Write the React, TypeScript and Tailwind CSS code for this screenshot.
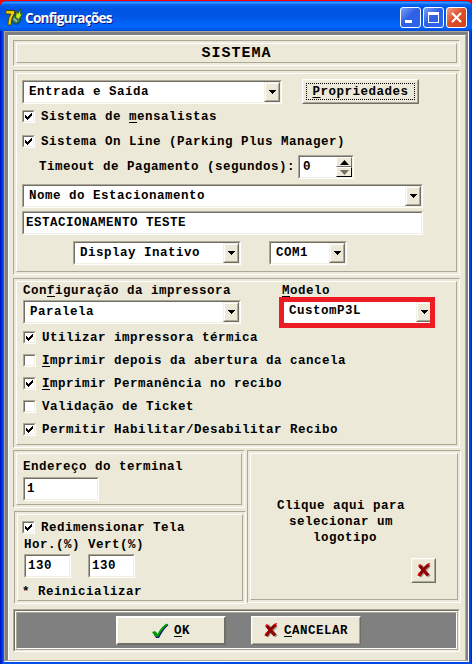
import React from "react";

const mono = "font-['Liberation_Mono','Courier_New',monospace] font-bold text-[12.5px] tracking-[0.5px] leading-4 text-black whitespace-pre";

function Panel({ className = "", inner = "", children }: { className?: string; inner?: string; children?: React.ReactNode }) {
  return (
    <div className={`shrink-0 border border-t-[#aca899] border-l-[#aca899] border-r-white border-b-white p-[2px] ${className}`}>
      <div className={`h-full border border-t-white border-l-white border-r-[#aca899] border-b-[#aca899] ${inner}`}>{children}</div>
    </div>
  );
}

function Sunken({ className = "", children }: { className?: string; children?: React.ReactNode }) {
  return (
    <div className={`shrink-0 border border-t-[#aca899] border-l-[#aca899] border-r-white border-b-white ${className}`}>
      <div className="flex h-full w-full items-center border border-t-[#716f64] border-l-[#716f64] border-r-[#f1efe2] border-b-[#f1efe2] bg-white">
        {children}
      </div>
    </div>
  );
}

function ArrowButton() {
  return (
    <div className="flex h-full w-4 shrink-0 items-center justify-center border border-t-[#f1efe2] border-l-[#f1efe2] border-r-[#716f64] border-b-[#716f64] bg-[#ece9d8]">
      <div className="flex h-full w-full items-center justify-center border border-t-white border-l-white border-r-[#aca899] border-b-[#aca899]">
        <svg width="7" height="4" className="shrink-0" shapeRendering="crispEdges">
          <path d="M0 0h7v1h-1v1h-1v1h-1v1h-1v-1h-1v-1h-1v-1h-1z" />
        </svg>
      </div>
    </div>
  );
}

function Combo({ className = "", text }: { className?: string; text: string }) {
  return (
    <Sunken className={`h-6 ${className}`}>
      <span className="flex-1 pl-[5px]">{text}</span>
      <ArrowButton />
    </Sunken>
  );
}

function Check({ className = "", checked = true, children }: { className?: string; checked?: boolean; children: React.ReactNode }) {
  return (
    <div className={`flex h-[13px] items-center gap-[6px] ${className}`}>
      <Sunken className="h-[13px] w-[13px]">
        {checked && (
          <svg width="7" height="7" className="ml-px shrink-0" shapeRendering="crispEdges">
            <path d="M0 2h1v1h1v1h1v-1h1v-1h1v-1h1v-1h1v3h-1v1h-1v1h-1v1h-1v1h-1v-1h-1v-1h-1z" />
          </svg>
        )}
      </Sunken>
      <span>{children}</span>
    </div>
  );
}

function U({ children }: { children: React.ReactNode }) {
  return <span className="underline decoration-1 underline-offset-2">{children}</span>;
}

function RedX() {
  return (
    <svg width="14" height="15" viewBox="0 0 14 15" className="shrink-0">
      <path d="M3 2l8.5 11M11.5 2L2 13" stroke="#a09c90" strokeWidth="3" transform="translate(1 .5)" fill="none" />
      <path d="M2.500 2.500L11 12.500M12 1.500Q7 5 2 13" stroke="#900000" strokeWidth="3.2" fill="none" />
      <path d="M1.500 2.500l2-1M10 2l3-1.500M1 12.500l1.500-3" stroke="#f00000" strokeWidth="1.2" fill="none" />
    </svg>
  );
}

const raised = "border border-t-white border-l-white border-r-[#716f64] border-b-[#716f64] bg-[#ece9d8]";
const raisedInner = "flex h-full w-full items-center justify-center border border-t-[#f1efe2] border-l-[#f1efe2] border-r-[#aca899] border-b-[#aca899]";

function TitleBar() {
  const btn = "flex h-[21px] w-[21px] items-center justify-center rounded-[3px] border border-white";
  return (
    <div className="flex h-[30px] shrink-0 items-center rounded-t-[6px] bg-[linear-gradient(180deg,#0058ee_0%,#3593ff_5%,#0262ee_13%,#0054e3_25%,#0054e3_45%,#0064fa_78%,#0066ff_88%,#0048d8_100%)] pl-[5px] pr-[5px]">
      <svg width="18" height="18" viewBox="0 0 18 18" className="mt-1 shrink-0">
        <circle cx="11" cy="10.500" r="4.600" fill="#287860" stroke="#123c50" />
        <path d="M.8 1.500h8.700v3Q6 9 6.200 16H2.800Q2.800 9 5.800 5H.8z" fill="#e8d000" stroke="#40380a" strokeWidth=".9" />
        <path d="M10.500 8.500l1-6.500 1.500 2.500L15.500 0v5l2-.5-3.500 6z" fill="#c8e818" stroke="#285010" strokeWidth=".8" />
        <path d="M8.500 9.500l3.500 3" stroke="#a0b8a0" strokeWidth="1.800" />
      </svg>
      <span className="ml-[2px] mt-[3px] flex-1 whitespace-nowrap font-['Open_Sans','Noto_Sans',sans-serif] text-[13.5px] font-bold leading-5 tracking-[-0.7px] text-white [text-shadow:1px_1px_0_#0a1883]">
        Configurações
      </span>
      <div className="flex gap-[2px] pt-[3px]">
        <div className={`${btn} bg-[linear-gradient(135deg,#7ba4f8,#2f5fe4_45%,#2b66f0)]`}>
          <svg width="19" height="19" shapeRendering="crispEdges"><path d="M4 12h7v3H4z" fill="#fff" /></svg>
        </div>
        <div className={`${btn} bg-[linear-gradient(135deg,#7ba4f8,#2f5fe4_45%,#2b66f0)]`}>
          <svg width="19" height="19" shapeRendering="crispEdges"><path d="M4 4h11v11H4zM5 7v7h9V7z" fill="#fff" fillRule="evenodd" /></svg>
        </div>
        <div className={`${btn} bg-[linear-gradient(135deg,#f0a088,#e0502a_45%,#d04018)]`}>
          <svg width="19" height="19"><path d="M5 5l9 9M14 5l-9 9" stroke="#fff" strokeWidth="2.2" /></svg>
        </div>
      </div>
    </div>
  );
}

export default function App() {
  return (
    <div className="h-[664px] w-[472px] overflow-hidden bg-[#ff0000] pt-px">
      <div className={`flex h-[663px] flex-col rounded-t-[7px] bg-[linear-gradient(90deg,#0010c8_0,#0030e0_2px,#1668f0_4px,#0050e8_5px,#0048e8_468px,#0050f0_470px,#0020b8_472px)] ${mono}`}>
        <TitleBar />
        <div className="ml-1 h-[631px] w-[465px] border border-t-[#aca899] border-l-[#aca899] border-r-white border-b-white">
          <div className="h-full border-b border-l-[3px] border-r-2 border-t-[3px] border-b-[#aca899] border-l-[#808080] border-r-[#808080] border-t-[#808080]">
            <div className="flex h-full flex-col border-l border-r border-t border-l-white border-r-[#aca899] border-t-white bg-[#ece9d8] pl-1 pt-1">
              <Panel className="h-[26px] w-[447px]" inner="flex items-center justify-center text-[15px] tracking-[1px]">
                <span className="pt-px">SISTEMA</span>
              </Panel>

              <Panel className="mt-1 h-[205px] w-[447px]" inner="pl-[5px] pt-[5px]">
                <div className="flex items-start">
                  <Combo className="mt-px w-[260px]" text="Entrada e Saída" />
                  <div className={`ml-5 h-[25px] w-[117px] ${raised}`}>
                    <div className={raisedInner}>
                      <div className="flex h-[17px] w-[109px] items-center justify-center border border-dotted border-black">
                        <span><U>P</U>ropriedades</span>
                      </div>
                    </div>
                  </div>
                </div>
                <Check className="mt-[6px]">Sistema de <U>m</U>ensalistas</Check>
                <Check className="mt-3">Sistema On Line (Parking Plus Manager)</Check>
                <div className="mt-[7px] flex h-6 items-center pl-[17px]">
                  <span className="w-[259px]">Timeout de Pagamento (segundos):</span>
                  <Sunken className="h-6 w-14">
                    <span className="flex-1 pl-[3px]">0</span>
                    <div className="flex h-full w-4 flex-col">
                      <div className="flex h-[10px] items-center justify-center border border-t-white border-l-white border-r-[#716f64] border-b-[#716f64] bg-[#ece9d8]">
                        <svg width="9" height="5" className="shrink-0"><path d="M4.500 0L9 5H0z" /></svg>
                      </div>
                      <div className="flex h-[10px] items-center justify-center border border-t-white border-l-white border-r-black border-b-black bg-[#ece9d8]">
                        <svg width="9" height="5" className="shrink-0"><path d="M0 0h9L4.500 5z" fill="#716f64" /></svg>
                      </div>
                    </div>
                  </Sunken>
                </div>
                <Combo className="mt-[5px] w-[401px]" text="Nome do Estacionamento" />
                <Sunken className="mt-[3px] h-6 w-[401px]"><span className="pl-[2px]">ESTACIONAMENTO TESTE</span></Sunken>
                <div className="mt-[6px] flex gap-7 pl-[51px]">
                  <Combo className="w-[168px]" text="Display Inativo" />
                  <Combo className="w-[78px]" text="COM1" />
                </div>
              </Panel>

              <Panel className="mt-[3px] h-[170px] w-[447px]" inner="pl-[6px]">
                <div className="flex h-[18px] items-center">
                  <span className="w-[259px]">Con<U>f</U>iguração da impressora</span>
                  <span><U>M</U>odelo</span>
                </div>
                <div className="-mt-[3px] flex items-start">
                  <Combo className="mt-[3px] w-[218px]" text="Paralela" />
                  <div className="ml-[38px] flex h-[31px] w-[156px] border-[5px] border-[#ed1c24] bg-white">
                    <span className="flex-1 pl-[5px] pt-px">CustomP3L</span>
                    <div className="h-5 w-[14px] overflow-hidden"><ArrowButton /></div>
                  </div>
                </div>
                <Check className="mt-[3px]">Utilizar impressora térmica</Check>
                <Check className="mt-[10px]" checked={false}><U>I</U>mprimir depois da abertura da cancela</Check>
                <Check className="mt-[10px]"><U>I</U>mprimir Permanência no recibo</Check>
                <Check className="mt-[10px]" checked={false}>Validação de Ticket</Check>
                <Check className="mt-[10px]">Permitir Habilitar/Desabilitar Recibo</Check>
              </Panel>

              <div className="mt-[2px] flex">
                <div className="flex w-[234px] flex-col">
                  <Panel className="h-[58px] w-[232px]" inner="pl-[6px] pt-[5px]">
                    <div className="h-[18px]">Endereço do terminal</div>
                    <Sunken className="h-6 w-[76px]"><span className="pl-[2px]">1</span></Sunken>
                  </Panel>
                  <Panel className="ml-px mt-[3px] h-[93px] w-[232px]" inner="pl-1 pt-[6px]">
                    <Check>Redimensionar Tela</Check>
                    <div className="mt-[3px] flex pl-[2px]">
                      <span className="w-16">Hor.(%)</span>
                      <span>Vert(%)</span>
                    </div>
                    <div className="mt-px flex gap-[17px] pl-[2px]">
                      <Sunken className="h-6 w-[47px]"><span className="pl-[2px]">130</span></Sunken>
                      <Sunken className="h-6 w-[47px]"><span className="pl-[2px]">130</span></Sunken>
                    </div>
                    <div className="mt-[6px] h-[14px]">* Reinicializar</div>
                  </Panel>
                </div>
                <Panel className="h-[153px] w-[214px]" inner="flex flex-col pt-[44px]">
                  <div className="pr-[26px] text-center">
                    Clique aqui para<br />selecionar um<br /> logotipo
                  </div>
                  <div className={`ml-[160px] mt-3 h-[25px] w-[25px] ${raised}`}>
                    <div className={raisedInner}><RedX /></div>
                  </div>
                </Panel>
              </div>

              <div className="mt-[5px] h-[43px] w-[447px] shrink-0 border border-t-[#aca899] border-l-[#aca899] border-r-white border-b-white">
                <div className="h-full border border-t-[#716f64] border-l-[#716f64] border-r-[#ece9d8] border-b-[#ece9d8]">
                  <div className="h-full border border-t-white border-l-white border-r-[#aca899] border-b-[#aca899]">
                    <div className="flex h-full gap-[25px] border border-t-[#aca899] border-l-[#aca899] border-r-white border-b-white bg-[#808080] pl-[99px] pt-[3px]">
                      <div className="h-[29px] w-[110px] border border-t-white border-l-white border-r-[#716f64] border-b-[#716f64]">
                        <div className="flex h-full items-center justify-center border border-t-white border-l-white border-r-[#716f64] border-b-[#716f64] bg-[#ece9d8]">
                          <svg width="17" height="16" viewBox="0 0 17 16" className="shrink-0">
                            <path d="M1 10l3-1 2 3Q9 5 15 1l1.500 1Q11 7 7 15H4z" fill="#101080" />
                            <path d="M0 9l3-1 2.500 3Q9 4 14.500 .5l1.500 1Q10 6 6 14H4z" fill="#00a000" />
                          </svg>
                          <span className="ml-[5px]"><U>O</U>K</span>
                        </div>
                      </div>
                      <div className={`h-[29px] w-[110px] ${raised}`}>
                        <div className={raisedInner}>
                          <RedX />
                          <span className="ml-[6px]"><U>C</U>ANCELAR</span>
                        </div>
                      </div>
                    </div>
                  </div>
                </div>
              </div>
            </div>
          </div>
        </div>
      </div>
    </div>
  );
}
